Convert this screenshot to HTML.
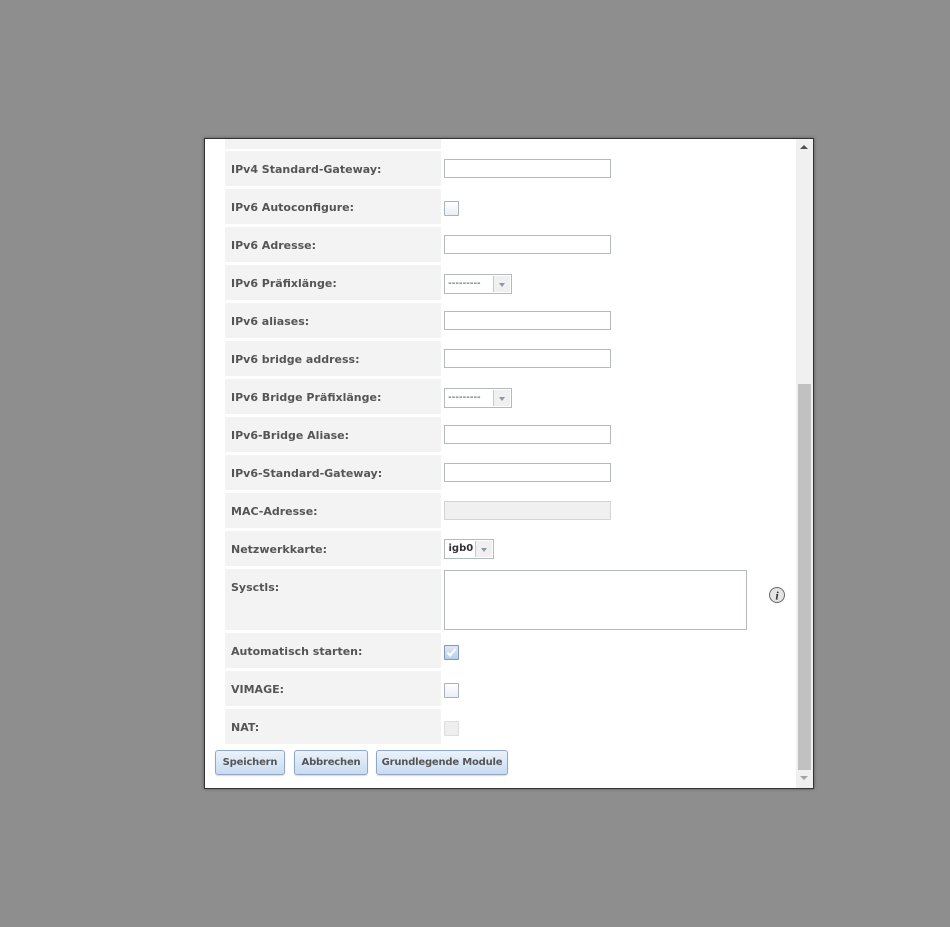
<!DOCTYPE html>
<html><head><style>
body{margin:0;background:#8e8e8e;width:950px;height:927px;position:relative;font-family:"DejaVu Sans",Verdana,sans-serif;overflow:hidden}
#dlg{position:absolute;left:204px;top:138px;width:608px;height:649px;background:#fff;border:1px solid #333;box-shadow:0 0 3px rgba(0,0,0,.4);overflow:hidden}
.row{position:absolute;left:20px;width:216px;background:#f3f3f3}
.lab{position:absolute;left:26px;font-size:11px;font-weight:bold;color:#555;white-space:nowrap}
.inp{position:absolute;left:239px;width:165px;height:17px;border:1px solid #b4b9c2;background:#fff}
.cb{position:absolute;left:239px;width:13px;height:13px;border:1px solid #a9b1bf;background:linear-gradient(#fff,#e9eef6);border-radius:1px}
.sel{position:absolute;left:239px;height:18px;border:1px solid #b4b9c2;background:#fff;font-size:10px;color:#333;line-height:18px}
.sel span{position:absolute;right:1px;top:1px;width:16px;height:16px;border-left:1px solid #c4c8cf;background:#f0f0f0}
.sel span:after{content:"";position:absolute;left:5px;top:7px;border:3px solid transparent;border-top:4px solid #8a98ad}
.btn{position:absolute;top:611px;height:23px;border:1px solid #8fa8c8;border-radius:3px;background:linear-gradient(#eaf2fb,#c9dcf1);font-size:10px;font-weight:bold;color:#555;text-align:center;line-height:23px;box-shadow:0 1px 1px rgba(0,0,0,.15);letter-spacing:-0.2px}
</style></head><body>
<div id="dlg">
<div class="row" style="top:-10px;height:20px"></div>
<div class="inp" style="top:-19px;border-color:#a0a8b8"></div>

<div class="row" style="top:12px;height:35px"></div><div class="lab" style="top:24px">IPv4 Standard-Gateway:</div><div class="inp" style="top:20px"></div>
<div class="row" style="top:50px;height:35px"></div><div class="lab" style="top:62px">IPv6 Autoconfigure:</div><div class="cb" style="top:62px"></div>
<div class="row" style="top:88px;height:35px"></div><div class="lab" style="top:100px">IPv6 Adresse:</div><div class="inp" style="top:96px"></div>
<div class="row" style="top:126px;height:35px"></div><div class="lab" style="top:138px">IPv6 Präfixlänge:</div><div class="sel" style="top:135px;width:66px">&nbsp;---------<span></span></div>
<div class="row" style="top:164px;height:35px"></div><div class="lab" style="top:176px">IPv6 aliases:</div><div class="inp" style="top:172px"></div>
<div class="row" style="top:202px;height:35px"></div><div class="lab" style="top:214px">IPv6 bridge address:</div><div class="inp" style="top:210px"></div>
<div class="row" style="top:240px;height:35px"></div><div class="lab" style="top:252px">IPv6 Bridge Präfixlänge:</div><div class="sel" style="top:249px;width:66px">&nbsp;---------<span></span></div>
<div class="row" style="top:278px;height:35px"></div><div class="lab" style="top:290px">IPv6-Bridge Aliase:</div><div class="inp" style="top:286px"></div>
<div class="row" style="top:316px;height:35px"></div><div class="lab" style="top:328px">IPv6-Standard-Gateway:</div><div class="inp" style="top:324px"></div>
<div class="row" style="top:354px;height:35px"></div><div class="lab" style="top:366px">MAC-Adresse:</div><div class="inp" style="top:362px;background:#f0f0f0;border-color:#d4d4d4"></div>
<div class="row" style="top:392px;height:35px"></div><div class="lab" style="top:404px">Netzwerkkarte:</div><div class="sel" style="top:400px;width:48px;font-weight:bold">&nbsp;igb0<span></span></div>
<div class="row" style="top:430px;height:61px"></div><div class="lab" style="top:442px">Sysctls:</div><div class="inp" style="top:431px;width:301px;height:58px"></div>
<svg style="position:absolute;left:563px;top:447px" width="18" height="18"><circle cx="9" cy="9" r="7.5" fill="#e4e4e4" stroke="#666" stroke-width="1"/><text x="9" y="13.5" font-family="Liberation Serif,serif" font-style="italic" font-weight="bold" font-size="12" text-anchor="middle" fill="#333">i</text></svg>
<div class="row" style="top:494px;height:35px"></div><div class="lab" style="top:506px">Automatisch starten:</div><div class="cb" style="top:506px;background:linear-gradient(#dce8f6,#b9cfea);border-color:#7f97b8"><svg width="13" height="13" style="position:absolute;left:0;top:0"><path d="M2.5 6.5 L5 9.5 L10.5 3" stroke="#fff" stroke-width="2" fill="none"/></svg></div>
<div class="row" style="top:532px;height:35px"></div><div class="lab" style="top:544px">VIMAGE:</div><div class="cb" style="top:544px"></div>
<div class="row" style="top:570px;height:35px"></div><div class="lab" style="top:582px">NAT:</div><div class="cb" style="top:582px;background:#eee;border-color:#ddd"></div>

<div class="btn" style="left:10px;width:68px">Speichern</div>
<div class="btn" style="left:89px;width:72px">Abbrechen</div>
<div class="btn" style="left:171px;width:130px">Grundlegende Module</div>

<div style="position:absolute;left:591px;top:0;width:17px;height:649px;background:#f0f0f0"></div>
<div style="position:absolute;left:593px;top:245px;width:13px;height:386px;background:#c1c1c1"></div>
<div style="position:absolute;left:595px;top:6px;border:4px solid transparent;border-bottom:4px solid #505050;border-top:0"></div>
<div style="position:absolute;left:595px;top:637px;border:4px solid transparent;border-top:4px solid #a3a3a3;border-bottom:0"></div>
</div>
</body></html>
